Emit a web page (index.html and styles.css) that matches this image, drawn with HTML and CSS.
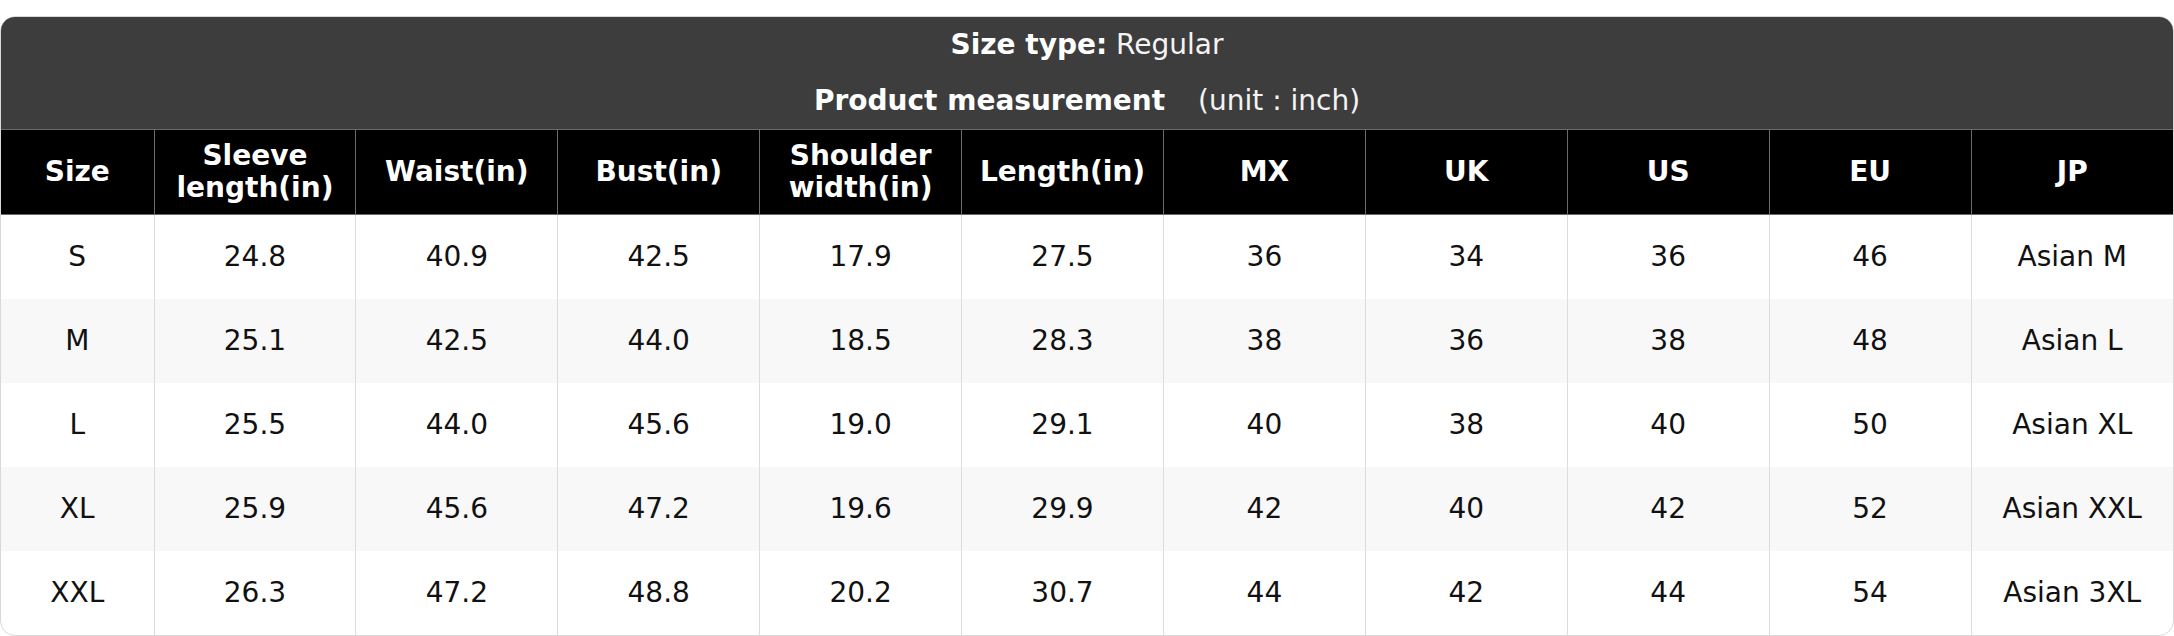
FILE: index.html
```html
<!DOCTYPE html>
<html lang="en">
<head>
<meta charset="utf-8">
<title>Size chart</title>
<link rel="stylesheet" href="styles.css">
</head>
<body>
<div class="chart">
  <div class="title">
    <div class="title-line"><b>Size type:</b> Regular</div>
    <div class="title-line"><b>Product measurement</b> <span class="unit">(unit : inch)</span></div>
  </div>
  <table class="sizes">
    <colgroup>
      <col class="c-first">
      <col span="10">
    </colgroup>
    <thead>
      <tr>
        <th>Size</th>
        <th>Sleeve<br>length(in)</th>
        <th>Waist(in)</th>
        <th>Bust(in)</th>
        <th>Shoulder<br>width(in)</th>
        <th>Length(in)</th>
        <th>MX</th>
        <th>UK</th>
        <th>US</th>
        <th>EU</th>
        <th>JP</th>
      </tr>
    </thead>
    <tbody>
      <tr><td>S</td><td>24.8</td><td>40.9</td><td>42.5</td><td>17.9</td><td>27.5</td><td>36</td><td>34</td><td>36</td><td>46</td><td>Asian M</td></tr>
      <tr><td>M</td><td>25.1</td><td>42.5</td><td>44.0</td><td>18.5</td><td>28.3</td><td>38</td><td>36</td><td>38</td><td>48</td><td>Asian L</td></tr>
      <tr><td>L</td><td>25.5</td><td>44.0</td><td>45.6</td><td>19.0</td><td>29.1</td><td>40</td><td>38</td><td>40</td><td>50</td><td>Asian XL</td></tr>
      <tr><td>XL</td><td>25.9</td><td>45.6</td><td>47.2</td><td>19.6</td><td>29.9</td><td>42</td><td>40</td><td>42</td><td>52</td><td>Asian XXL</td></tr>
      <tr><td>XXL</td><td>26.3</td><td>47.2</td><td>48.8</td><td>20.2</td><td>30.7</td><td>44</td><td>42</td><td>44</td><td>54</td><td>Asian 3XL</td></tr>
    </tbody>
  </table>
</div>
</body>
</html>
```

FILE: styles.css
```css
html, body {
  margin: 0;
  padding: 0;
  background: #ffffff;
}

body {
  padding-top: 16px;
  font-family: "DejaVu Sans", "Liberation Sans", sans-serif;
  font-size: 28px;
  color: #111111;
}

.chart {
  width: 2174px;
  box-sizing: border-box;
  border: 1px solid #d8d8d8;
  border-radius: 15px;
  overflow: hidden;
  background: #ffffff;
}

.title {
  background: #3d3d3d;
  color: #f4f4f4;
  text-align: center;
}

.title-line {
  padding: 8px 0;
  line-height: 40px;
}

.title-line b {
  color: #ffffff;
  font-weight: bold;
}

.unit {
  margin-left: 24px;
}

.sizes {
  width: 100%;
  border-collapse: collapse;
  table-layout: fixed;
}

.c-first {
  width: 153px;
}

.sizes th {
  background: #000000;
  color: #ffffff;
  font-weight: bold;
  line-height: 32px;
  padding: 10px 4px;
  height: 64px;
  border: 1px solid #6a6a6a;
  text-align: center;
  vertical-align: middle;
}

.sizes thead tr th:first-child {
  border-left: none;
}

.sizes thead tr th:last-child {
  border-right: none;
}

.sizes td {
  height: 84px;
  padding: 0 4px;
  box-sizing: border-box;
  line-height: 32px;
  text-align: center;
  vertical-align: middle;
  border-left: 1px solid #dcdcdc;
  border-right: 1px solid #dcdcdc;
}

.sizes tbody tr td:first-child {
  border-left: none;
}

.sizes tbody tr td:last-child {
  border-right: none;
}

.sizes tbody tr:nth-child(even) td {
  background: #f8f8f8;
}
```
